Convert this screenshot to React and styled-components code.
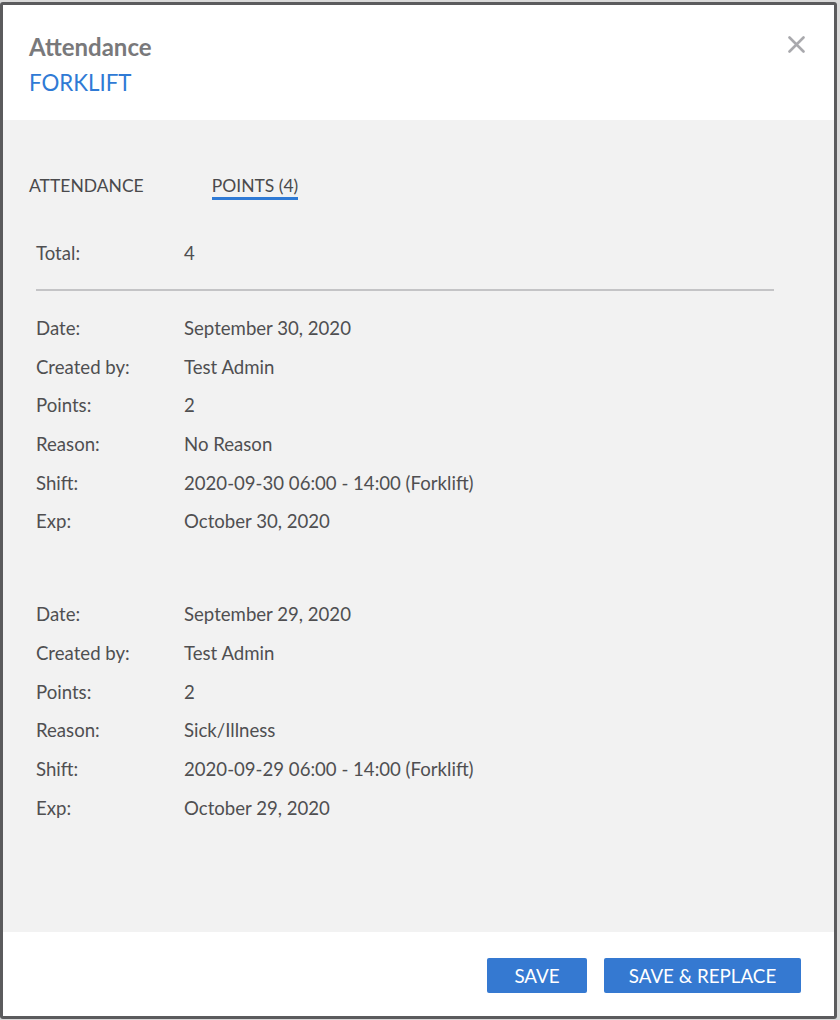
import styled, { createGlobalStyle } from "styled-components";

const GlobalStyle = createGlobalStyle`
  body {
    margin: 0;
    background: #d9d9d9;
    font-family: "Source Sans Pro", Lato, "Liberation Sans", sans-serif;
  }
`;

const records = [
  {
    date: "September 30, 2020",
    by: "Test Admin",
    points: "2",
    reason: "No Reason",
    shift: "2020-09-30 06:00 - 14:00 (Forklift)",
    exp: "October 30, 2020",
  },
  {
    date: "September 29, 2020",
    by: "Test Admin",
    points: "2",
    reason: "Sick/Illness",
    shift: "2020-09-29 06:00 - 14:00 (Forklift)",
    exp: "October 29, 2020",
  },
];

const App = () => {
  return (
    <>
      <GlobalStyle />
      <Modal>
        <Header>
          <div>
            <Title>Attendance</Title>
            <Subtitle>FORKLIFT</Subtitle>
          </div>
          <Close aria-label="close">
            <svg width="17" height="17" viewBox="0 0 17 17">
              <path d="M1.5 1.5 L15.5 15.5 M15.5 1.5 L1.5 15.5" stroke="#a9a9ad" strokeWidth="2.6" strokeLinecap="round" />
            </svg>
          </Close>
        </Header>

        <Body>
          <Tabs>
            <Tab>ATTENDANCE</Tab>
            <Tab active>POINTS (4)</Tab>
          </Tabs>

          <Row>
            <Label>Total:</Label>
            <Value>4</Value>
          </Row>
          <Divider />

          {records.map((r, i) => (
            <Group key={i}>
              <Row>
                <Label>Date:</Label>
                <Value>{r.date}</Value>
              </Row>
              <Row>
                <Label>Created by:</Label>
                <Value>{r.by}</Value>
              </Row>
              <Row>
                <Label>Points:</Label>
                <Value>{r.points}</Value>
              </Row>
              <Row>
                <Label>Reason:</Label>
                <Value>{r.reason}</Value>
              </Row>
              <Row>
                <Label>Shift:</Label>
                <Value>{r.shift}</Value>
              </Row>
              <Row>
                <Label>Exp:</Label>
                <Value>{r.exp}</Value>
              </Row>
            </Group>
          ))}
        </Body>

        <Footer>
          <Button>SAVE</Button>
          <Button wide>SAVE &amp; REPLACE</Button>
        </Footer>
      </Modal>
    </>
  );
};

const Modal = styled.div`
  box-sizing: border-box;
  width: 837px;
  height: 1017px;
  margin-top: 2px;
  border: 3px solid #5b5b5d;
  border-radius: 3px;
  background: #fff;
  display: flex;
  flex-direction: column;
  overflow: hidden;
`;

const Header = styled.div`
  height: 115px;
  box-sizing: border-box;
  padding: 26px 29px 0 26px;
  display: flex;
  justify-content: space-between;
  align-items: flex-start;
  background: #fff;
`;

const Title = styled.div`
  font-size: 24px;
  font-weight: 700;
  color: #79797b;
  line-height: 32px;
`;

const Subtitle = styled.div`
  margin-top: 5px;
  font-size: 22.3px;
  color: #2f7ad5;
  line-height: 30px;
`;

const Close = styled.div`
  margin-top: 5px;
  width: 17px;
  height: 17px;
`;

const Body = styled.div`
  flex: 1;
  background: #f2f2f2;
  padding: 55px 0 0 33px;
`;

const Tabs = styled.div`
  display: flex;
  gap: 68px;
  margin-left: -7px;
  margin-bottom: 34px;
`;

const Tab = styled.div`
  font-size: 17.5px;
  line-height: 22px;
  color: #4a4a4c;
  border-bottom: 3px solid ${(p) => (p.active ? "#2f7ad5" : "transparent")};
`;

const Group = styled.div`
  & + & {
    margin-top: 54px;
  }
`;

const Row = styled.div`
  display: grid;
  grid-template-columns: 148px 1fr;
  height: 38.7px;
  align-items: center;
  font-size: 18.6px;
  color: #4f4f51;
`;

const Label = styled.div``;

const Value = styled.div``;

const Divider = styled.div`
  width: 738px;
  height: 2px;
  background: #c4c4c6;
  margin: 16px 0 18px;
`;

const Footer = styled.div`
  height: 84px;
  box-sizing: border-box;
  display: flex;
  justify-content: flex-end;
  align-items: flex-start;
  gap: 17px;
  padding: 26px 33px 0 0;
  background: #fff;
`;

const Button = styled.button`
  width: ${(p) => (p.wide ? "197px" : "100px")};
  height: 35px;
  border: 0;
  border-radius: 2px;
  background: #3579d1;
  color: #fff;
  font-family: Lato, "Liberation Sans", sans-serif;
  font-size: 18.8px;
  cursor: pointer;
`;

export default App;
